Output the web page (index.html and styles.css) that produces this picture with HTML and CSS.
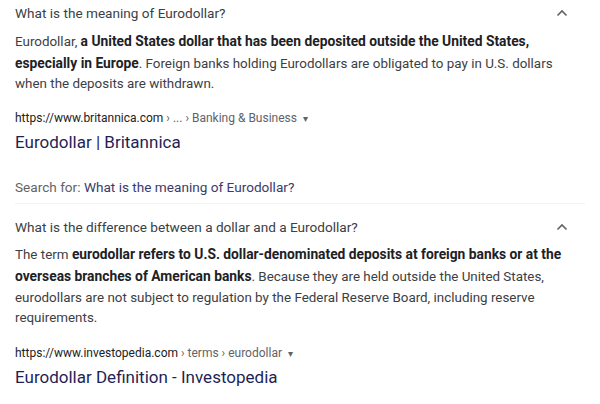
FILE: index.html
```html
<!DOCTYPE html>
<html>
<head>
<meta charset="utf-8">
<link rel="stylesheet" href="styles.css">
</head>
<body>
<div class="page">
  <section class="qa">
    <div class="q-row">
      <span class="question">What is the meaning of Eurodollar?</span>
      <svg class="chev" width="12" height="8" viewBox="0 0 12 8"><path d="M1.5 6.5 L6 2 L10.5 6.5" fill="none" stroke="#5f6368" stroke-width="1.6"/></svg>
    </div>
    <p class="answer">Eurodollar, <b>a United States dollar that has been deposited outside the United States, especially in Europe</b>. Foreign banks holding Eurodollars are obligated to pay in U.S. dollars when the deposits are withdrawn.</p>
    <div class="url">https://www.britannica.com<span class="crumb"> › ... › Banking &amp; Business</span><span class="caret">▾</span></div>
    <div class="title">Eurodollar | Britannica</div>
    <div class="search">Search for: <span class="sq">What is the meaning of Eurodollar?</span></div>
  </section>
  <section class="qa second">
    <div class="q-row">
      <span class="question">What is the difference between a dollar and a Eurodollar?</span>
      <svg class="chev" width="12" height="8" viewBox="0 0 12 8"><path d="M1.5 6.5 L6 2 L10.5 6.5" fill="none" stroke="#5f6368" stroke-width="1.6"/></svg>
    </div>
    <p class="answer">The term <b>eurodollar refers to U.S. dollar-denominated deposits at foreign banks or at the overseas branches of American banks</b>. Because they are held outside the United States, eurodollars are not subject to regulation by the Federal Reserve Board, including reserve requirements.</p>
    <div class="url">https://www.investopedia.com<span class="crumb"> › terms › eurodollar</span><span class="caret">▾</span></div>
    <div class="title">Eurodollar Definition - Investopedia</div>
  </section>
</div>
</body>
</html>
```
FILE: styles.css
```css
html, body { margin: 0; padding: 0; background: #fff; }
body { font-family: Roboto, "Noto Sans", sans-serif; color: #202124; width: 600px; height: 404px; overflow: hidden; }
.page { padding: 0 15px; }
.qa { display: flex; flex-direction: column; }
.q-row { display: flex; justify-content: space-between; align-items: center; height: 26px; padding-right: 17px; }
.question { font-size: 13.6px; color: #3c4043; }
.chev { display: block; }
.answer { margin: 5px 0 0; font-size: 13.4px; line-height: 20.7px; color: #3c4043; width: 560px; }
.answer b { color: #202124; font-weight: 700; font-size: 13.8px; line-height: 20.7px; }
.url { margin-top: 15px; font-size: 12px; line-height: 16px; color: #202124; }
.crumb { color: #5f6368; }
.caret { color: #5f6368; font-size: 10px; margin-left: 6px; }
.title { margin-top: 4px; font-size: 17px; line-height: 22px; color: #1f1f55; }
.search { margin-top: 24px; font-size: 13.6px; color: #5f6368; line-height: 20px; }
.sq { color: #3b3b6a; }
.second { margin-top: 6px; border-top: 1px solid #f3f3f3; padding-top: 10px; }
.second .answer { margin-top: 4px; }
.second .url { margin-top: 16px; }
.second .title { margin-top: 4px; }
```
